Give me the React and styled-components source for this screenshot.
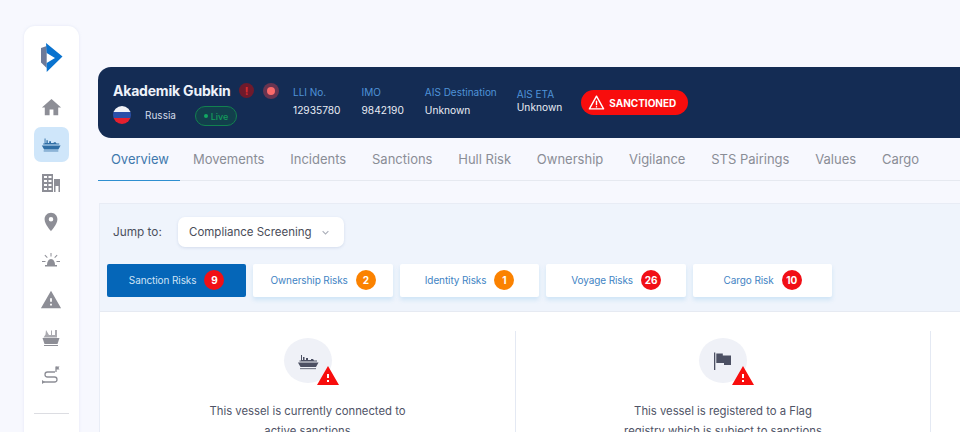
import React from "react";
import styled, { createGlobalStyle } from "styled-components";
import { MdHome, MdPlace, MdWarning, MdKeyboardArrowDown } from "react-icons/md";

const GlobalStyle = createGlobalStyle`
  html, body { margin: 0; padding: 0; background: #f7f8fe; }
  * { box-sizing: border-box; }
  body { font-family: Inter, "Liberation Sans", sans-serif; overflow: hidden; }
`;

const Page = styled.div`
  display: flex;
  width: 960px;
  height: 432px;
  padding: 26px 0 0 24px;
  gap: 19px;
  overflow: hidden;
`;

const Sidebar = styled.nav`
  flex: none;
  width: 55px;
  height: 430px;
  background: #fff;
  border-radius: 11px 11px 0 0;
  box-shadow: 0 0 3px rgba(190, 200, 225, 0.35);
  display: flex;
  flex-direction: column;
  align-items: center;
  padding-top: 17px;
`;

const LogoWrap = styled.div`
  height: 30px;
  margin-bottom: 15px;
`;

const NavItem = styled.div`
  width: 35px;
  height: 35px;
  margin: 0 1px 3.5px 0;
  padding-top: ${(p) => p.$drop || 0}px;
  border-radius: 7px;
  display: flex;
  align-items: center;
  justify-content: center;
  color: ${(p) => (p.$active ? "#2f6ea5" : "#8d8e96")};
  background: ${(p) => (p.$active ? "#cfe6fa" : "transparent")};
`;

const NavRule = styled.div`
  width: 35px;
  height: 1px;
  margin: 17px 1px 0 0;
  background: #dcdde2;
`;

const Main = styled.main`
  flex: none;
  width: 900px;
  padding-top: 41px;
`;

const Banner = styled.header`
  height: 71px;
  background: #142c54;
  border-radius: 13px 0 0 13px;
  display: flex;
  align-items: center;
  gap: 21px;
  padding-left: 15px;
  color: #eef2fa;
`;

const Identity = styled.div`
  width: 159px;
  flex: none;
  padding-top: 3px;
`;

const NameRow = styled.div`
  display: flex;
  align-items: center;
  width: 170px;
`;

const VesselName = styled.h1`
  flex: none;
  margin: 0;
  font-size: 14px;
  font-weight: 700;
  letter-spacing: -0.2px;
  width: 126px;
  white-space: nowrap;
`;

const AlertDot = styled.span`
  flex: none;
  width: 15px;
  height: 15px;
  margin-right: 9px;
  border-radius: 50%;
  background: #6f1a2c;
  color: #d92c2c;
  font-size: 10px;
  font-weight: 800;
  display: flex;
  align-items: center;
  justify-content: center;
`;

const PulseDot = styled.span`
  flex: none;
  width: 8px;
  height: 8px;
  margin-left: 4px;
  border-radius: 50%;
  background: #fb6a6a;
  box-shadow: 0 0 0 4px rgba(190, 60, 75, 0.5);
`;

const CountryRow = styled.div`
  display: flex;
  align-items: center;
  margin-top: 5px;
`;

const FlagBall = styled.span`
  flex: none;
  width: 18px;
  height: 18px;
  border-radius: 50%;
  background: linear-gradient(#f2f3f7 0 34%, #2b4fa8 34% 66%, #e5202e 66%);
`;

const Country = styled.span`
  font-size: 10px;
  margin-left: 14px;
  width: 50px;
  color: #d5dcea;
`;

const LivePill = styled.span`
  width: 42px;
  height: 20px;
  margin-top: 2px;
  border: 1px solid #12814f;
  border-radius: 10px;
  background: #123f4c;
  color: #129c5b;
  font-size: 9px;
  font-weight: 500;
  display: flex;
  align-items: center;
  justify-content: center;
  gap: 3px;
  &::before {
    content: "";
    width: 4px;
    height: 4px;
    border-radius: 50%;
    background: #12a862;
  }
`;

const Field = styled.div`
  flex: none;
  display: flex;
  flex-direction: column;
  gap: ${(p) => (p.$tight ? "1px" : "6px")};
  margin-bottom: ${(p) => (p.$tight ? "5px" : "4px")};
  margin-left: ${(p) => (p.$tight ? "-1px" : "0")};
  font-size: 10.2px;
  line-height: 12px;
`;

const FieldLabel = styled.span`
  color: #4f93d8;
  font-size: 10px;
`;

const FieldValue = styled.span`
  color: #e9edf5;
`;

const SanctionedBadge = styled.div`
  flex: none;
  width: 107px;
  height: 25px;
  margin-left: -2px;
  border-radius: 13px;
  background: #f80d0d;
  color: #fff;
  font-size: 10px;
  font-weight: 700;
  display: flex;
  align-items: center;
  gap: 4px;
  padding-left: 7px;
`;

const Tabs = styled.div`
  display: flex;
  height: 43px;
  border-bottom: 1px solid #e6e9f0;
`;

const Tab = styled.div`
  height: 43px;
  padding: 0 ${(p) => (p.$active ? "11px" : "12.9px")} 0 12.9px;
  display: flex;
  align-items: center;
  font-size: 13px;
  white-space: nowrap;
  color: ${(p) => (p.$active ? "#3f78ad" : "#8a8d96")};
  border-bottom: 1px solid ${(p) => (p.$active ? "#2f8fd0" : "transparent")};
`;

const Panel = styled.section`
  margin: 22px 0 0 1px;
  background: #fff;
  border-left: 1px solid #e9edf6;
`;

const PanelTop = styled.div`
  background: #eff4fc;
  border-top: 1px solid #e8ecf5;
  border-bottom: 1px solid #e6eaf2;
  height: 109px;
  padding-left: 7px;
`;

const JumpRow = styled.div`
  display: flex;
  align-items: center;
  height: 60px;
  padding: 0 0 4px 6px;
`;

const JumpLabel = styled.span`
  width: 65px;
  font-size: 11.800px;
  color: #4c505c;
`;

const Select = styled.div`
  width: 166px;
  height: 30px;
  padding-left: 11px;
  border-radius: 7px;
  background: #fff;
  box-shadow: 0 1px 3px rgba(170, 185, 215, 0.4);
  display: flex;
  align-items: center;
  gap: 7px;
  font-size: 11.500px;
  white-space: nowrap;
  color: #4a4d59;
`;

const RiskTabs = styled.div`
  display: flex;
  gap: 7.2px;
`;

const RiskTab = styled.div`
  width: 139.3px;
  height: 33px;
  padding-bottom: 2px;
  border-radius: 2px;
  display: flex;
  align-items: center;
  justify-content: center;
  gap: 8px;
  font-size: 10px;
  letter-spacing: -0.1px;
  background: ${(p) => (p.$active ? "#0566b8" : "#fff")};
  color: ${(p) => (p.$active ? "#cfe3f6" : "#3f84c4")};
  box-shadow: ${(p) => (p.$active ? "none" : "0 3px 4px rgba(170, 210, 240, 0.45)")};
`;

const Count = styled.span`
  width: 20px;
  height: 20px;
  border-radius: 50%;
  background: ${(p) => p.$color};
  color: #fff;
  font-size: 10px;
  font-weight: 700;
  display: flex;
  align-items: center;
  justify-content: center;
`;

const Cards = styled.div`
  display: grid;
  grid-template-columns: 416px 415px;
  margin-top: 19px;
`;

const Card = styled.article`
  height: 110px;
  border-right: 1px solid #e4e9f3;
  display: flex;
  flex-direction: column;
  align-items: center;
  padding-top: 7px;
  text-align: center;
`;

const IconCircle = styled.div`
  position: relative;
  width: 48px;
  height: 48px;
  border-radius: 50%;
  background: #eff1f7;
  display: flex;
  align-items: center;
  justify-content: center;
  color: #4c5063;
`;

const WarnCorner = styled.span`
  position: absolute;
  right: -8px;
  bottom: -5px;
  color: #f80d0d;
  display: flex;
`;

const CardText = styled.p`
  margin: 18px 0 0;
  width: 215px;
  font-size: 11.300px;
  line-height: 20px;
  color: #4f5366;
`;

const ShipIcon = ({ size = 20 }) => (
  <svg width={size} height={size} viewBox="0 0 24 24" fill="currentColor">
    <path d="M5 6h1v5h1V8h1.500v3H10V9h2v2h3v-1h2l1 1.500h3v1H3.500v-1H5z" />
    <path d="M2 13.500h20.500l-2.500 4.500H4.500z" />
    <path d="M4 19h16v1.200H4z" opacity=".7" />
  </svg>
);

const BuildingIcon = () => (
  <svg width="20" height="20" viewBox="0 0 20 20" fill="currentColor">
    <path fillRule="evenodd" d="M1 1h11v18H1zM3 3v2h3V3zm4.500 0v2h3V3zM3 7v2h3V7zm4.500 0v2h3V7zM3 11v2h3v-2zm4.500 0v2h3v-2zM3 15v2h3v-2zm4.500 0v2h3v-2z" />
    <path fillRule="evenodd" d="M13 6h6v13h-1.500v-6h-3v6H13z" />
  </svg>
);

const AlarmIcon = () => (
  <svg width="20" height="20" viewBox="0 0 20 20" fill="currentColor">
    <path d="M6 15c0-3 1.500-6 4-6s4 3 4 6z" />
    <path d="M4 15h12v1.500H4z" />
    <path d="M9.500 3h1v3.500h-1zM3.500 5.500l.7-.7 2.500 2.500-.7.7zM16.500 5.500l-.7-.7-2.500 2.500.7.7zM1 11h3.500v1H1zM15.500 11H19v1h-3.500z" />
  </svg>
);

const TankerIcon = () => (
  <svg width="20" height="20" viewBox="0 0 20 20" fill="currentColor">
    <path d="M5 3l3 5h2V3.500h1V8h3V3h2v7.500H2.500l2-3z" opacity=".75" />
    <path d="M1.500 11h17l-2 6h-13z" />
    <path d="M3 18h14v1H3z" />
  </svg>
);

const RouteIcon = () => (
  <svg width="20" height="20" viewBox="0 0 20 20" fill="none" stroke="currentColor" strokeWidth="1.300">
    <path d="M14 7H6.500a2.500 2.500 0 0 0 0 5h7a2.500 2.500 0 0 1 0 5H2.500" />
    <path d="M15 7V1.500" />
    <path d="M15 1.500h3.500L17.500 3l1 1.500H15z" fill="currentColor" stroke="none" />
    <path d="M1 15l3 2-3 2z" fill="currentColor" stroke="none" />
  </svg>
);

const FlagsIcon = () => (
  <svg width="20" height="20" viewBox="0 0 20 20" fill="currentColor">
    <path d="M1 1.500h1.300V19H1z" />
    <path d="M3.300 2.500h6.500v2H18v9.500H11v-2H3.300z" />
  </svg>
);

const Logo = () => (
  <svg width="22" height="30" viewBox="0 0 22 30">
    <path d="M0 5l5.700-2V25L0 19.500z" fill="#6d7a99" />
    <path d="M5 0L21.500 13.500 5.700 29V20L14 15 5.700 10z" fill="#0a73cf" />
  </svg>
);

const tabs = ["Overview", "Movements", "Incidents", "Sanctions", "Hull Risk", "Ownership", "Vigilance", "STS Pairings", "Values", "Cargo"];

const risks = [
  { label: "Sanction Risks", count: 9, color: "#f10f16", active: true },
  { label: "Ownership Risks", count: 2, color: "#fb8200" },
  { label: "Identity Risks", count: 1, color: "#fb8200" },
  { label: "Voyage Risks", count: 26, color: "#f10f16" },
  { label: "Cargo Risk", count: 10, color: "#f10f16" },
];

export default function App() {
  return (
    <>
      <GlobalStyle />
      <Page>
        <Sidebar>
          <LogoWrap><Logo /></LogoWrap>
          <NavItem $drop={3}><MdHome size={23} /></NavItem>
          <NavItem $active><ShipIcon size={22} /></NavItem>
          <NavItem $drop={1}><BuildingIcon /></NavItem>
          <NavItem $drop={1}><MdPlace size={22} /></NavItem>
          <NavItem $drop={1}><AlarmIcon /></NavItem>
          <NavItem $drop={3}><MdWarning size={22} /></NavItem>
          <NavItem><TankerIcon /></NavItem>
          <NavItem><RouteIcon /></NavItem>
          <NavRule />
        </Sidebar>
        <Main>
          <Banner>
            <Identity>
              <NameRow>
                <VesselName>Akademik Gubkin</VesselName>
                <AlertDot>!</AlertDot>
                <PulseDot />
              </NameRow>
              <CountryRow>
                <FlagBall />
                <Country>Russia</Country>
                <LivePill>Live</LivePill>
              </CountryRow>
            </Identity>
            <Field>
              <FieldLabel>LLI No.</FieldLabel>
              <FieldValue>12935780</FieldValue>
            </Field>
            <Field>
              <FieldLabel>IMO</FieldLabel>
              <FieldValue>9842190</FieldValue>
            </Field>
            <Field>
              <FieldLabel>AIS Destination</FieldLabel>
              <FieldValue>Unknown</FieldValue>
            </Field>
            <Field $tight>
              <FieldLabel>AIS ETA</FieldLabel>
              <FieldValue>Unknown</FieldValue>
            </Field>
            <SanctionedBadge>
              <svg width="17" height="17" viewBox="0 0 24 24" fill="none" stroke="#fff" strokeWidth="2" strokeLinejoin="round" strokeLinecap="round">
                <path d="M12 3L22 21H2z" />
                <path d="M12 10v5M12 18v.2" />
              </svg>
              SANCTIONED
            </SanctionedBadge>
          </Banner>
          <Tabs>
            {tabs.map((t, i) => (
              <Tab key={t} $active={i === 0}>{t}</Tab>
            ))}
          </Tabs>
          <Panel>
            <PanelTop>
              <JumpRow>
                <JumpLabel>Jump to:</JumpLabel>
                <Select>
                  Compliance Screening
                  <MdKeyboardArrowDown size={13} color="#a9adb8" />
                </Select>
              </JumpRow>
              <RiskTabs>
                {risks.map((r) => (
                  <RiskTab key={r.label} $active={r.active}>
                    {r.label}
                    <Count $color={r.color}>{r.count}</Count>
                  </RiskTab>
                ))}
              </RiskTabs>
            </PanelTop>
            <Cards>
              <Card>
                <IconCircle>
                  <ShipIcon size={24} />
                  <WarnCorner><MdWarning size={24} /></WarnCorner>
                </IconCircle>
                <CardText>This vessel is currently connected to active sanctions</CardText>
              </Card>
              <Card>
                <IconCircle>
                  <FlagsIcon />
                  <WarnCorner><MdWarning size={24} /></WarnCorner>
                </IconCircle>
                <CardText>This vessel is registered to a Flag registry which is subject to sanctions</CardText>
              </Card>
            </Cards>
          </Panel>
        </Main>
      </Page>
    </>
  );
}
